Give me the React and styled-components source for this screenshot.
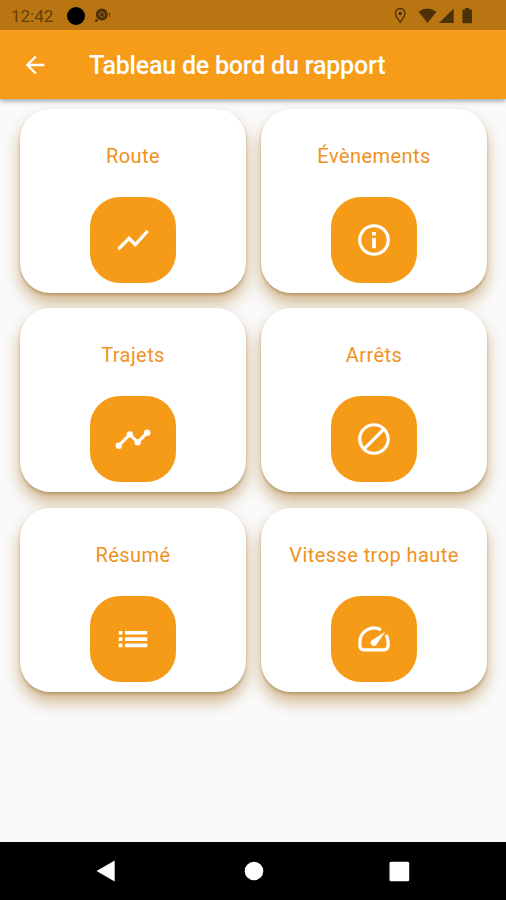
import React from 'react';
import styled, { createGlobalStyle } from 'styled-components';
import {
  MdArrowBack,
  MdBlock,
  MdShowChart,
} from 'react-icons/md';

const GlobalStyle = createGlobalStyle`
  * {
    box-sizing: border-box;
  }

  body {
    margin: 0;
    font-family: Roboto, 'Liberation Sans', sans-serif;
    background: #fafafa;
  }
`;

const Screen = styled.div`
  display: flex;
  flex-direction: column;
  width: 506px;
  height: 900px;
  overflow: hidden;
  background: #fafafa;
`;

const Header = styled.header`
  position: relative;
  z-index: 1;
  flex: none;
  background: #f69c18;
  box-shadow: 0 2px 5px rgba(40, 55, 60, 0.45);
`;

const StatusBar = styled.div`
  display: flex;
  align-items: center;
  justify-content: space-between;
  height: 30px;
  padding: 1px 31px 0 11px;
  color: #4c3006;
  background: #b87512;
`;

const StatusGroup = styled.div`
  display: flex;
  align-items: center;
`;

const Clock = styled.span`
  width: 56px;
  font-size: 17px;
  line-height: 20px;
  color: #634009;
`;

const Dot = styled.span`
  width: 18px;
  height: 18px;
  margin-right: 9px;
  border-radius: 50%;
  background: #000;
`;

const Toolbar = styled.div`
  display: flex;
  align-items: center;
  height: 69px;
  padding: 0 21px;
  color: #fff;
`;

const Title = styled.h1`
  margin: 3px 0 0 40px;
  font-size: 25px;
  font-weight: 500;
  line-height: 30px;
  letter-spacing: -0.2px;
  white-space: nowrap;
`;

const Grid = styled.main`
  flex: 1;
  display: grid;
  grid-template-columns: 226px 226px;
  grid-auto-rows: 184px;
  gap: 15.3px 15px;
  padding: 10px 0 0 20px;
`;

const Card = styled.div`
  display: flex;
  flex-direction: column;
  align-items: center;
  padding-top: 34px;
  border-radius: 30px;
  background: #fff;
  box-shadow: 0 2px 3px rgba(130, 84, 12, 0.35), 0 10px 16px rgba(160, 100, 12, 0.45);
`;

const Label = styled.span`
  margin-bottom: 27px;
  font-size: 20px;
  line-height: 27px;
  letter-spacing: 0.43px;
  white-space: nowrap;
  color: #ef9221;
`;

const IconTile = styled.div`
  display: flex;
  flex: none;
  align-items: center;
  justify-content: center;
  width: 86px;
  height: 86px;
  border-radius: 30px;
  color: #fff;
  background: #f59b17;
`;

const NavBar = styled.nav`
  display: flex;
  align-items: center;
  justify-content: space-between;
  flex: none;
  height: 58px;
  padding: 0 96px;
  background: #000;
`;

const HomeButton = styled.svg`
  margin-left: 3px;
`;

function InfoIcon({ size }) {
  return (
    <svg width={size} height={size} viewBox="0 0 24 24" fill="currentColor">
      <circle cx="12" cy="12" r="9" fill="none" stroke="currentColor" strokeWidth="2" />
      <path d="M10.8 6.9h2.4v2.3h-2.4zM10.8 10.8h2.4v6.4h-2.4z" />
    </svg>
  );
}

function TimelineIcon({ size }) {
  return (
    <svg width={size} height={size} viewBox="0 0 24 24" fill="currentColor">
      <path d="M3 16.2l7-7.1 5 5 6-6.1" fill="none" stroke="currentColor" strokeWidth="1.9" />
      <circle cx="3" cy="16.2" r="2" />
      <circle cx="10" cy="9.1" r="2" />
      <circle cx="15" cy="14.1" r="2" />
      <circle cx="21" cy="8" r="2" />
    </svg>
  );
}

function ListIcon({ size }) {
  return (
    <svg width={size} height={size} viewBox="0 0 24 24" fill="currentColor">
      <path d="M3 6.9h2.3v2.3H3zM3 10.9h2.3v2.3H3zM3 14.9h2.3v2.3H3z" />
      <path d="M6.9 6.9H21v2.3H6.9zM6.9 10.9H21v2.3H6.9zM6.9 14.9H21v2.3H6.9z" />
    </svg>
  );
}

function SpeedIcon({ size }) {
  return (
    <svg width={size} height={size} viewBox="0 0 24 24" fill="currentColor">
      <path
        d="M16.4 6.2A8.9 8.9 0 0 0 3.1 13.8v2.6q.2 2.4 2.5 2.5h12.8q2.3-.1 2.5-2.5v-2.6a9 9 0 0 0-1.3-4.4"
        fill="none"
        stroke="currentColor"
        strokeWidth="2"
      />
      <path d="M19.2 7.2l-8.5 5.6a2 2 0 1 0 2.8 2.8z" />
    </svg>
  );
}

const reports = [
  { label: 'Route', icon: MdShowChart },
  { label: 'Évènements', icon: InfoIcon },
  { label: 'Trajets', icon: TimelineIcon },
  { label: 'Arrêts', icon: MdBlock },
  { label: 'Résumé', icon: ListIcon },
  { label: 'Vitesse trop haute', icon: SpeedIcon },
];

function RecordIcon() {
  return (
    <svg width="18" height="18" viewBox="0 0 18 18">
      <circle cx="7.8" cy="7.6" r="4.6" fill="#8a570c" stroke="#4c3006" strokeWidth="2.8" />
      <path d="M6 6l3.6 3.4m0-3.4L6 9.4" stroke="#4c3006" strokeWidth="1.3" />
      <circle cx="2.3" cy="13.6" r="1.2" fill="#2c1b02" />
      <path d="M14.6 6.8l1-.8v4" fill="none" stroke="#5f3d09" />
    </svg>
  );
}

function StatusIcons() {
  return (
    <svg width="82" height="18" viewBox="0 0 82 18" fill="currentColor">
      <path
        d="M7.2 15.2C4.6 11.8 2.4 9 2.4 6.3a4.8 4.8 0 0 1 9.6 0c0 2.7-2.2 5.5-4.8 8.9z"
        fill="none"
        stroke="currentColor"
        strokeWidth="1.3"
      />
      <circle cx="7.2" cy="6.5" r="1.8" />
      <path d="M25.5 4.8Q34.5-1.6 43.5 4.8L34.5 16z" />
      <path d="M60.7 1.6v14.5H46z" />
      <path d="M72.2 1h4v1.6h1.6q1.2 0 1.2 1.2v11.1q0 1.3-1.2 1.3h-7.2q-1.2 0-1.2-1.3V3.8q0-1.2 1.2-1.2h1.6z" />
    </svg>
  );
}

function App() {
  return (
    <>
      <GlobalStyle />
      <Screen>
        <Header>
          <StatusBar>
            <StatusGroup>
              <Clock>12:42</Clock>
              <Dot />
              <RecordIcon />
            </StatusGroup>
            <StatusIcons />
          </StatusBar>
          <Toolbar>
            <MdArrowBack size={28} />
            <Title>Tableau de bord du rapport</Title>
          </Toolbar>
        </Header>
        <Grid>
          {reports.map(({ label, icon: Icon }) => (
            <Card key={label}>
              <Label>{label}</Label>
              <IconTile>
                <Icon size={38} />
              </IconTile>
            </Card>
          ))}
        </Grid>
        <NavBar>
          <svg width="19" height="22" viewBox="0 0 19 22" fill="#fff">
            <path d="M0.5 11L18.7 0.5v21z" />
          </svg>
          <HomeButton width="20" height="20" viewBox="0 0 20 20" fill="#fff">
            <circle cx="10" cy="10" r="9.3" />
          </HomeButton>
          <svg width="21" height="21" viewBox="0 0 21 21" fill="#fff">
            <rect x="0.5" y="0.8" width="19.7" height="19.5" rx="1.5" />
          </svg>
        </NavBar>
      </Screen>
    </>
  );
}

export default App;
